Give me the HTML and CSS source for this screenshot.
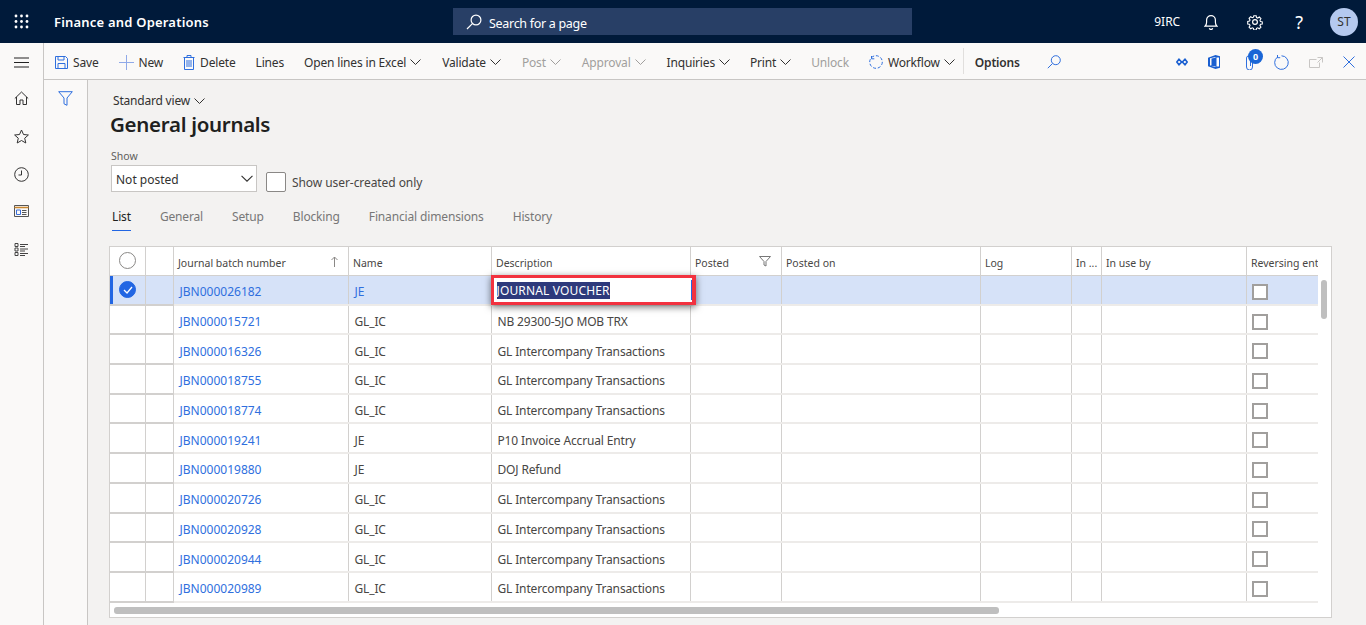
FILE: index.html
```html
<!DOCTYPE html>
<html lang="en">

<head>
  <meta charset="UTF-8" />
  <title>General journals – Finance and Operations</title>
  <link rel="stylesheet" href="styles.css">
</head>

<body>
  <header class="topbar">
    <svg class="waffle" width="15" height="15" viewBox="0 0 15 15" fill="#fff">
      <circle cx="2" cy="2" r="1.4" /><circle cx="7.5" cy="2" r="1.4" /><circle cx="13" cy="2" r="1.4" />
      <circle cx="2" cy="7.5" r="1.4" /><circle cx="7.5" cy="7.5" r="1.4" /><circle cx="13" cy="7.5" r="1.4" />
      <circle cx="2" cy="13" r="1.4" /><circle cx="7.5" cy="13" r="1.4" /><circle cx="13" cy="13" r="1.4" />
    </svg>
    <div class="app-name">Finance and Operations</div>
    <div class="search">
      <svg width="16" height="16" viewBox="0 0 16 16" fill="none" stroke="#fff" stroke-width="1.2">
        <circle cx="10" cy="6" r="4.9" /><path d="M6.4 9.6 1 15" />
      </svg>
      <span>Search for a page</span>
    </div>
    <div class="top-right">
      <span class="company">9IRC</span>
      <svg class="top-icon bell" width="14" height="16" viewBox="0 0 14 16" fill="none" stroke="#fff" stroke-width="1.2">
        <path d="M1 12.2c1.2-1 1.6-2 1.6-4V6a4.4 4.4 0 0 1 8.8 0v2.200c0 2 .4 3 1.600 4z" /><path d="M5.300 14.300a1.800 1.800 0 0 0 3.400 0" />
      </svg>
      <svg class="top-icon gear" width="16" height="16" viewBox="0 0 16 16" fill="none" stroke="#fff" stroke-width="1.200">
        <circle cx="8" cy="8" r="2.400" />
        <path d="M6.700 1h2.600l.4 2 1.300.6 1.800-1.100 1.800 1.800-1.100 1.800.6 1.300 2 .4v2.400l-2 .4-.6 1.300 1.100 1.800-1.800 1.800-1.800-1.100-1.300.6-.4 2H6.700l-.4-2-1.300-.6-1.800 1.100-1.800-1.800 1.100-1.800-.6-1.300-2-.4V7.400l2-.4.6-1.300-1.100-1.800 1.800-1.800 1.800 1.100 1.300-.6z" transform="translate(.8 .8) scale(.9)" />
      </svg>
      <span class="help">?</span>
      <span class="avatar">ST</span>
    </div>
  </header>

  <div class="below">
    <nav class="sidenav">
      <svg width="15" height="11" viewBox="0 0 15 11" stroke="#222" stroke-width="1.100"><path d="M0 1h15M0 5.500h15M0 10h15" /></svg>
      <svg width="15" height="15" viewBox="0 0 15 15" fill="none" stroke="#333" stroke-width="1"><path d="M.8 7.500 7.500 1l6.700 6.500M2.500 6v7.500h3.500V9h3v4.500h3.500V6" /></svg>
      <svg width="15" height="15" viewBox="0 0 15 15" fill="none" stroke="#333" stroke-width="1"><path d="M7.500 1l2 4.500 4.900.5-3.700 3.200 1.100 4.800-4.300-2.500L3.200 14l1.100-4.800L.6 6l4.900-.5z" /></svg>
      <svg width="15" height="15" viewBox="0 0 15 15" fill="none" stroke="#333" stroke-width="1"><circle cx="7.500" cy="7.500" r="6.800" /><path d="M7.500 3.500v4.500h-3" /></svg>
      <svg width="15" height="12" viewBox="0 0 15 12" fill="none" stroke="#555" stroke-width="1"><path d="M.5.500h14v11H.5z" /><path d="M.5 2.500h14" stroke="#c9872f" stroke-width="1.500" /><path d="M2.500 5h4v4.500h-4z" stroke="#3a6fd8" /><path d="M8 5.500h4.500M8 7.500h4.500M8 9.500h4.500" /></svg>
      <svg class="last-nav" width="15" height="15" viewBox="0 0 15 15" fill="none" stroke="#444" stroke-width="1"><path d="M1 1.500h3v3H1zM1 6h3v3H1zM1 10.500h3v3H1zM6 2.500h8M6 4.500h5M6 7h8M6 9h5M6 11.500h8M6 13.500h5" /></svg>
    </nav>

    <div class="work">
      <div class="toolbar">
        <div class="tool">
          <svg width="13" height="13" viewBox="0 0 13 13" fill="none" stroke="#2f6fde" stroke-width="1"><path d="M.5.500h10l2 2v10H.5z" /><path d="M3 .500v3.500h6V.500M3 12.500V7.500h7v5" /></svg>
          Save
        </div>
        <div class="tool">
          <svg width="15" height="15" viewBox="0 0 15 15" stroke="#8fa9e8" stroke-width="1"><path d="M7.500 0v15M0 7.500h15" /></svg>
          New
        </div>
        <div class="tool">
          <svg width="12" height="15" viewBox="0 0 12 15" fill="none" stroke="#2f6fde" stroke-width="1"><path d="M.5 2.500h11M1.500 2.500v12h9v-12M4 2.500V.500h4v2M4 5v7M6 5v7M8 5v7" /></svg>
          Delete
        </div>
        <div class="tool">Lines</div>
        <div class="tool">Open lines in Excel <svg class="chev" viewBox="0 0 11 6"><path d="M.5.500l5 5 5-5" /></svg></div>
        <div class="tool">Validate <svg class="chev" viewBox="0 0 11 6"><path d="M.5.500l5 5 5-5" /></svg></div>
        <div class="tool off">Post <svg class="chev" viewBox="0 0 11 6"><path d="M.5.500l5 5 5-5" /></svg></div>
        <div class="tool off">Approval <svg class="chev" viewBox="0 0 11 6"><path d="M.5.500l5 5 5-5" /></svg></div>
        <div class="tool">Inquiries <svg class="chev" viewBox="0 0 11 6"><path d="M.5.500l5 5 5-5" /></svg></div>
        <div class="tool tight">Print <svg class="chev" viewBox="0 0 11 6"><path d="M.5.500l5 5 5-5" /></svg></div>
        <div class="tool off tight">Unlock</div>
        <div class="tool">
          <svg width="14" height="14" viewBox="0 0 14 14" fill="none" stroke="#2f6fde" stroke-width="1"><circle cx="7" cy="7" r="6.300" stroke-dasharray="3 1.800" /><path d="M2.500 1v2.800h2.800" /></svg>
          Workflow <svg class="chev" viewBox="0 0 11 6"><path d="M.5.500l5 5 5-5" /></svg>
        </div>
        <div class="tool-sep"></div>
        <div class="tool options">Options</div>
        <svg class="tool-search" width="14" height="14" viewBox="0 0 14 14" fill="none" stroke="#2f6fde" stroke-width="1"><circle cx="8.800" cy="5.200" r="4.500" /><path d="M5.500 8.500.8 13.200" /></svg>

        <div class="tool-right">
          <svg width="12" height="8" viewBox="0 0 12 8" fill="none" stroke="#1a5fd0" stroke-width="1.600"><path d="M3 1.200 5.600 4 3 6.800.8 4zM9 1.200 11.200 4 9 6.800 6.400 4z" /></svg>
          <svg width="12" height="14" viewBox="0 0 12 14"><path d="M7.500 0 0 2.800v8.400L7.500 14l4.500-1.300V1.300zM7.500 12 2.500 10.700 7.500 11.300V2.700L3.500 3.600v6.500L2 10.700V3.200L7.500 2z" fill="#1a5fd0" /><path d="M8.500 2.500H11v9H8.500z" fill="#fff" /></svg>
          <div class="attach">
            <svg width="9" height="15" viewBox="0 0 9 15" fill="none" stroke="#2f6fde" stroke-width="1"><path d="M7.500 4v8a3 3 0 0 1-6 0V3a2 2 0 0 1 4 0v8" /></svg>
            <span class="badge">0</span>
          </div>
          <svg width="15" height="15" viewBox="0 0 15 15" fill="none" stroke="#2f6fde" stroke-width="1"><path d="M3.600 2a6.800 6.800 0 1 0 3.900-1.200M3.500 0v2.700h2.700" /></svg>
          <svg width="14" height="11" viewBox="0 0 14 11" fill="none" stroke="#c8c6c4" stroke-width="1"><path d="M10.500 5.500v5H.5V2.500h7M8.500.500h5v5M13.500.500l-5 5" /></svg>
          <svg width="12" height="12" viewBox="0 0 12 12" stroke="#2f6fde" stroke-width="1"><path d="M.5.500l11 11M11.500.500l-11 11" /></svg>
        </div>
      </div>

      <div class="panes">
        <aside class="filterpane">
          <svg width="15" height="15" viewBox="0 0 15 15" fill="none" stroke="#2f6fde" stroke-width="1"><path d="M.7.700h13.600L9 7v7.300l-3-1.500V7z" /></svg>
        </aside>

        <main class="content">
          <div class="viewname">Standard view <svg class="chev" viewBox="0 0 11 6"><path d="M.5.500l5 5 5-5" /></svg></div>
          <h1>General journals</h1>

          <div class="show-row">
            <div>
              <label class="show-label">Show</label>
              <div class="select"><span class="select-text">Not posted</span> <svg class="chev select-chev" viewBox="0 0 11 6"><path d="M.5.500l5 5 5-5" /></svg></div>
            </div>
            <div class="usercheck"><span class="box"></span> Show user-created only</div>
          </div>

          <div class="tabs">
            <span class="tab active">List</span>
            <span class="tab">General</span>
            <span class="tab">Setup</span>
            <span class="tab">Blocking</span>
            <span class="tab">Financial dimensions</span>
            <span class="tab">History</span>
          </div>

          <div class="grid">
            <table>
              <colgroup>
                <col class="c1"><col class="c2"><col class="c3"><col class="c4"><col class="c5"><col class="c6"><col class="c7"><col class="c8"><col class="c9"><col class="c10"><col class="c11">
              </colgroup>
              <thead>
                <tr>
                  <th><span class="radio"></span></th>
                  <th></th>
                  <th class="sorted">Journal batch number <svg width="7" height="11" viewBox="0 0 7 11" fill="none" stroke="#8a8886" stroke-width="1"><path d="M3.500 11V1M.5 4l3-3 3 3" /></svg></th>
                  <th>Name</th>
                  <th>Description</th>
                  <th class="sorted">Posted <svg width="12" height="11" viewBox="0 0 12 11" fill="none" stroke="#777" stroke-width="1"><path d="M.5.500h11L7 5.500V10l-2-1V5.500z" /></svg></th>
                  <th>Posted on</th>
                  <th>Log</th>
                  <th>In ...</th>
                  <th>In use by</th>
                  <th>Reversing ent</th>
                </tr>
              </thead>
              <tbody>
                <tr class="picked">
                  <td class="mark"><span class="radio on"><svg width="10" height="8" viewBox="0 0 10 8" fill="none" stroke="#fff" stroke-width="1.300"><path d="M1 4l3 3 5-6" /></svg></span></td>
                  <td></td>
                  <td><a>JBN000026182</a></td>
                  <td><a>JE</a></td>
                  <td class="editing"><div class="editbox"><span class="selected">JOURNAL VOUCHER</span></div></td>
                  <td></td><td></td><td></td><td></td><td></td>
                  <td><span class="check"></span></td>
                </tr>
                <tr><td></td><td></td><td><a>JBN000015721</a></td><td>GL_IC</td><td>NB 29300-5JO MOB TRX</td><td></td><td></td><td></td><td></td><td></td><td><span class="check"></span></td></tr>
                <tr><td></td><td></td><td><a>JBN000016326</a></td><td>GL_IC</td><td>GL Intercompany Transactions</td><td></td><td></td><td></td><td></td><td></td><td><span class="check"></span></td></tr>
                <tr><td></td><td></td><td><a>JBN000018755</a></td><td>GL_IC</td><td>GL Intercompany Transactions</td><td></td><td></td><td></td><td></td><td></td><td><span class="check"></span></td></tr>
                <tr><td></td><td></td><td><a>JBN000018774</a></td><td>GL_IC</td><td>GL Intercompany Transactions</td><td></td><td></td><td></td><td></td><td></td><td><span class="check"></span></td></tr>
                <tr><td></td><td></td><td><a>JBN000019241</a></td><td>JE</td><td>P10 Invoice Accrual Entry</td><td></td><td></td><td></td><td></td><td></td><td><span class="check"></span></td></tr>
                <tr><td></td><td></td><td><a>JBN000019880</a></td><td>JE</td><td>DOJ Refund</td><td></td><td></td><td></td><td></td><td></td><td><span class="check"></span></td></tr>
                <tr><td></td><td></td><td><a>JBN000020726</a></td><td>GL_IC</td><td>GL Intercompany Transactions</td><td></td><td></td><td></td><td></td><td></td><td><span class="check"></span></td></tr>
                <tr><td></td><td></td><td><a>JBN000020928</a></td><td>GL_IC</td><td>GL Intercompany Transactions</td><td></td><td></td><td></td><td></td><td></td><td><span class="check"></span></td></tr>
                <tr><td></td><td></td><td><a>JBN000020944</a></td><td>GL_IC</td><td>GL Intercompany Transactions</td><td></td><td></td><td></td><td></td><td></td><td><span class="check"></span></td></tr>
                <tr><td></td><td></td><td><a>JBN000020989</a></td><td>GL_IC</td><td>GL Intercompany Transactions</td><td></td><td></td><td></td><td></td><td></td><td><span class="check"></span></td></tr>
              </tbody>
            </table>
            <div class="vscroll"></div>
            <div class="hscroll"></div>
          </div>
        </main>
      </div>
    </div>
  </div>
</body>

</html>
```

FILE: styles.css
```css
* {
  box-sizing: border-box;
}

html,
body {
  height: 625px;
  overflow: hidden;
}

body {
  margin: 0;
  font-family: 'Noto Sans', 'Open Sans', sans-serif;
  font-size: 12px;
  color: #323130;
  background-color: #f3f2f1;
}

/* top bar */
.topbar {
  height: 43px;
  display: flex;
  align-items: center;
  background-color: #001a3a;
  color: #fff;
}

.waffle {
  margin-left: 14px;
}

.app-name {
  margin-left: 25px;
  width: 399px;
  font-size: 13px;
  font-weight: 600;
  letter-spacing: 0.2px;
}

.search {
  width: 459px;
  height: 27px;
  padding-left: 13px;
  display: flex;
  align-items: center;
  gap: 7px;
  background-color: #283f66;
  font-size: 12.5px;
  letter-spacing: -0.3px;
}

.search span {
  padding-top: 3px;
}

.top-right {
  margin-left: auto;
  display: flex;
  align-items: center;
  font-size: 12px;
}

.company {
  margin-right: 24px;
}

.top-icon {
  margin-right: 28px;
}

.top-icon.bell {
  margin-right: 29px;
}

.top-icon.gear {
  margin-right: 32px;
}

.help {
  margin-right: 27px;
  font-size: 18px;
}

.avatar {
  width: 28px;
  height: 28px;
  margin-right: 8px;
  border-radius: 50%;
  display: flex;
  align-items: center;
  justify-content: center;
  background-color: #b4c9ef;
  color: #323130;
}

/* area under the bar */
.below {
  display: flex;
  height: 582px;
}

.sidenav {
  width: 44px;
  flex: none;
  display: flex;
  flex-direction: column;
  align-items: center;
  gap: 23px;
  padding-top: 14px;
  padding-right: 1px;
  background-color: #faf9f8;
  border-right: 1px solid #c8c6c4;
}

.last-nav {
  margin-top: 2px;
}

.work {
  flex: 1;
  min-width: 0;
  display: flex;
  flex-direction: column;
}

/* command bar */
.toolbar {
  height: 37px;
  flex: none;
  display: flex;
  align-items: center;
  padding: 2px 0 0 11px;
  gap: 20px;
  background-color: #faf9f8;
  border-bottom: 1px solid #c8c6c4;
}

.tool {
  display: flex;
  align-items: center;
  gap: 4px;
  white-space: nowrap;
  letter-spacing: -0.17px;
}

.tool.tight {
  margin-left: -1px;
}

.tool svg:first-child {
  margin-right: 1px;
}

.tool.off {
  color: #a19f9d;
}

.chev {
  width: 11px;
  height: 6px;
  fill: none;
  stroke: currentColor;
  stroke-width: 1;
}

.tool-sep {
  width: 1px;
  height: 26px;
  margin: -2px -9px 0 -12px;
  background-color: #e1dfdd;
}

.tool.options {
  font-weight: 600;
}

.tool-search {
  margin-left: 7px;
}

.tool-right {
  margin-left: auto;
  margin-right: 11px;
  display: flex;
  align-items: center;
  gap: 20px;
}

.attach {
  position: relative;
  display: flex;
  margin-left: 5px;
}

.badge {
  position: absolute;
  top: -6px;
  left: 3px;
  width: 15px;
  height: 15px;
  border-radius: 50%;
  background-color: #1a66d6;
  color: #fff;
  font-size: 9px;
  font-weight: 700;
  text-align: center;
  line-height: 15px;
}

/* filter pane strip */
.panes {
  flex: 1;
  display: flex;
  min-height: 0;
}

.filterpane {
  width: 44px;
  flex: none;
  padding: 11px 0 0 14px;
  background-color: #faf9f8;
  border-right: 1px solid #c8c6c4;
}

/* page content */
.content {
  flex: 1;
  min-width: 0;
  padding: 13px 34px 0 22px;
}

.viewname {
  margin-left: 3px;
  display: flex;
  align-items: center;
  gap: 4px;
  line-height: 16px;
  letter-spacing: -0.2px;
}

h1 {
  margin: 1px 0 0;
  font-size: 20.5px;
  line-height: 28px;
  font-weight: 600;
  color: #201f1e;
  letter-spacing: -0.3px;
}

.show-row {
  display: flex;
  align-items: flex-end;
  gap: 9px;
  margin: 12px 0 0 1px;
}

.show-label {
  display: block;
  font-size: 10.500px;
  line-height: 13px;
  color: #605e5c;
}

.select {
  width: 146px;
  height: 27px;
  margin-top: 2px;
  padding: 0 4px;
  display: flex;
  align-items: center;
  justify-content: space-between;
  background-color: #fff;
  border: 1px solid #c8c6c4;
  color: #323130;
}

.select-text {
  padding-top: 2px;
}

.select-chev {
  width: 12px;
  height: 7px;
  margin-right: -1px;
}

.usercheck {
  display: flex;
  align-items: center;
  gap: 6px;
  letter-spacing: -0.07px;
  color: #484644;
}

.box {
  width: 20px;
  height: 20px;
  background-color: #fff;
  border: 1px solid #8a8886;
  border-radius: 2px;
}

.tabs {
  display: flex;
  gap: 29px;
  margin-top: 17px;
  padding-left: 2px;
  color: #777;
  letter-spacing: -0.15px;
}

.tab {
  line-height: 16px;
  padding-bottom: 5px;
}

.tab.active {
  color: #201f1e;
  border-bottom: 1px solid #2266e3;
}

/* grid */
.grid {
  position: relative;
  height: 372px;
  margin: 15px 0 0 -1px;
  background-color: #fff;
  border: 1px solid #d2d0ce;
  overflow: hidden;
}

table {
  width: 1208px;
  table-layout: fixed;
  border-collapse: collapse;
}

.c1 { width: 35px; }
.c2 { width: 28px; }
.c3 { width: 175px; }
.c4 { width: 143px; }
.c5 { width: 199px; }
.c6 { width: 91px; }
.c7 { width: 199px; }
.c8 { width: 91px; }
.c9 { width: 30px; }
.c10 { width: 145px; }
.c11 { width: 72px; }

th {
  height: 28px;
  padding: 4px 4px 0 4.500px;
  text-align: left;
  font-size: 10.500px;
  font-weight: 400;
  color: #484644;
  white-space: nowrap;
  overflow: hidden;
  border-right: 1px solid #d2d0ce;
  border-bottom: 1px solid #d2d0ce;
}

th.sorted svg {
  float: right;
  margin: 0 6px 0 0;
}

th:last-child,
td:last-child {
  border-right: 0;
}

th:first-child {
  padding: 0;
}

td {
  height: 29.700px;
  padding: 4px 0 0 6px;
  white-space: nowrap;
  border-right: 1px solid #d2d0ce;
  border-bottom: 2px solid #edebe9;
  color: #484644;
  letter-spacing: -0.15px;
}

td:last-child {
  padding-left: 5px;
}

td a {
  color: #2f6fde;
  letter-spacing: 0;
}

td:nth-child(-n+2) {
  background-color: #fff;
  border-bottom-color: #d2d0ce;
}

.picked td,
.picked td:nth-child(-n+2) {
  background-color: #d6e2f8;
}

.picked td.mark {
  box-shadow: inset 3px 0 0 #2266e3;
}

.radio {
  display: block;
  width: 17px;
  height: 17px;
  margin-left: 9px;
  border: 1px solid #8a8886;
  border-radius: 50%;
  background-color: #fff;
}

td.mark {
  padding: 0;
}

.radio.on {
  display: flex;
  align-items: center;
  justify-content: center;
  background-color: #2266e3;
  border-color: #2266e3;
}

.check {
  display: block;
  width: 16px;
  height: 16px;
  background-color: #fff;
  border: 2px solid #a19f9d;
}

/* cell in edit mode, outlined in the picture */
.editing {
  position: relative;
  padding: 0;
}

.editbox {
  position: absolute;
  top: -1px;
  left: -1px;
  width: 205px;
  height: 30px;
  padding: 4px 0 0 3px;
  background-color: #fff;
  border: 3px solid #f2323f;
  border-right-width: 4px;
  box-shadow: 0 2px 7px rgba(0, 0, 0, 0.55);
  line-height: 17px;
  color: #fff;
}

.editbox::after {
  content: "";
  position: absolute;
  top: 2px;
  bottom: 2px;
  right: 0;
  width: 1px;
  background-color: #2266e3;
}

.selected {
  display: inline-block;
  background-color: #2e3a7c;
  letter-spacing: 0.15px;
}

.vscroll {
  position: absolute;
  top: 33px;
  right: 4px;
  width: 6px;
  height: 39px;
  border-radius: 3px;
  background-color: #bfbfbf;
}

.hscroll {
  position: absolute;
  left: 4px;
  bottom: 3px;
  width: 885px;
  height: 7px;
  border-radius: 3px;
  background-color: #bfbfbf;
}
```
